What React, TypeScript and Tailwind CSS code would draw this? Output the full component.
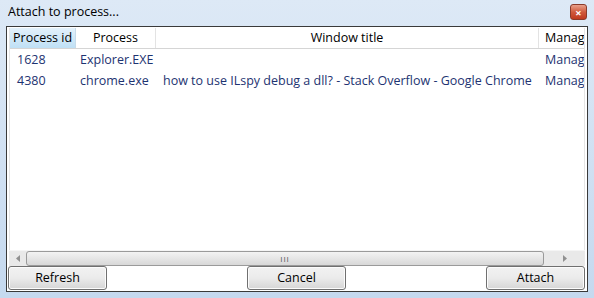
import React from "react";

const font = { fontFamily: '"Segoe UI","Open Sans","Noto Sans",sans-serif' };

function Btn({ label, w }: { label: string; w: string }) {
  return (
    <div
      className={`${w} h-[24px] flex items-center justify-center rounded-[3px] border border-[#707070] bg-gradient-to-b from-[#f2f2f2] via-[#ebebeb] to-[#d6d6d6] text-[12.5px] text-black shadow-[inset_0_0_0_1px_#fcfcfc]`}
    >
      {label}
    </div>
  );
}

export default function App() {
  const rows = [
    { id: "1628", proc: "Explorer.EXE", title: "", m: "Manag" },
    { id: "4380", proc: "chrome.exe", title: "how to use ILspy debug a dll? - Stack Overflow - Google Chrome", m: "Manag" },
  ];
  return (
    <div
      style={font}
      className="w-[594px] h-[298px] bg-gradient-to-b from-[#dde9f6] to-[#c5d9ef] flex flex-col overflow-hidden"
    >
      <div className="h-[26px] flex items-start justify-between pl-[8px] pr-[7px] pt-[3px]">
        <span className="text-[12.5px] text-black leading-[18px]">Attach to process...</span>
        <div className="mt-[1px] w-[17px] h-[16px] rounded-[3px] border border-[#8a3b2a] bg-gradient-to-b from-[#e8a08a] via-[#d05a3c] to-[#c0391e] flex items-center justify-center text-white text-[11px] font-bold leading-none">
          ×
        </div>
      </div>
      <div className="mx-[6px] h-[266px] border border-[#3a3a3a] bg-white flex flex-col">
        <div className="mx-[2px] mt-[1px] h-[237px] flex flex-col border-l border-r border-[#e5e5e5] overflow-hidden">
          <div className="h-[21px] flex border-b border-[#d5d5d5] text-[12.5px] text-black">
            <div className="w-[66px] shrink-0 bg-gradient-to-b from-[#e3f1fb] to-[#bfe0f5] border-r border-[#c7dbe9] pl-[3px] flex items-center whitespace-nowrap">Process id</div>
            <div className="w-[80px] shrink-0 border-r border-[#e3e3e3] flex items-center justify-center">Process</div>
            <div className="w-[383px] shrink-0 border-r border-[#e3e3e3] flex items-center justify-center">Window title</div>
            <div className="flex-1 pl-[6px] flex items-center whitespace-nowrap overflow-hidden">Manag</div>
          </div>
          <div className="pt-[1px] text-[12.5px] text-[#1d3371]">
            {rows.map((r) => (
              <div key={r.id} className="h-[21px] flex items-center whitespace-nowrap">
                <div className="w-[66px] shrink-0 pl-[7px]">{r.id}</div>
                <div className="w-[80px] shrink-0 pl-[4px]">{r.proc}</div>
                <div className="w-[383px] shrink-0 pl-[7px] overflow-hidden">{r.title}</div>
                <div className="flex-1 pl-[6px] overflow-hidden">{r.m}</div>
              </div>
            ))}
          </div>
        </div>
        <div className="mx-[2px] h-[17px] flex items-center bg-[#e9e9e9] border-t border-[#f5f5f5]">
          <div className="w-[17px] flex items-center justify-center">
            <svg width="4" height="7" viewBox="0 0 4 7"><path d="M4 0L0 3.5L4 7Z" fill="#909090" /></svg>
          </div>
          <div className="w-[518px] h-[15px] rounded-[3px] border border-[#9a9a9a] bg-gradient-to-b from-[#f3f3f3] to-[#d8d8d8] flex items-center justify-center">
            <span className="text-[8px] text-[#555] leading-none tracking-[1px]">III</span>
          </div>
          <div className="flex-1 flex items-center justify-center">
            <svg width="4" height="7" viewBox="0 0 4 7"><path d="M0 0L4 3.5L0 7Z" fill="#909090" /></svg>
          </div>
        </div>
        <div className="flex-1 flex items-end pb-[1px] justify-between pl-[1px] pr-[2px]">
          <Btn label="Refresh" w="w-[99px]" />
          <Btn label="Cancel" w="w-[99px]" />
          <Btn label="Attach" w="w-[99px]" />
        </div>
      </div>
    </div>
  );
}
